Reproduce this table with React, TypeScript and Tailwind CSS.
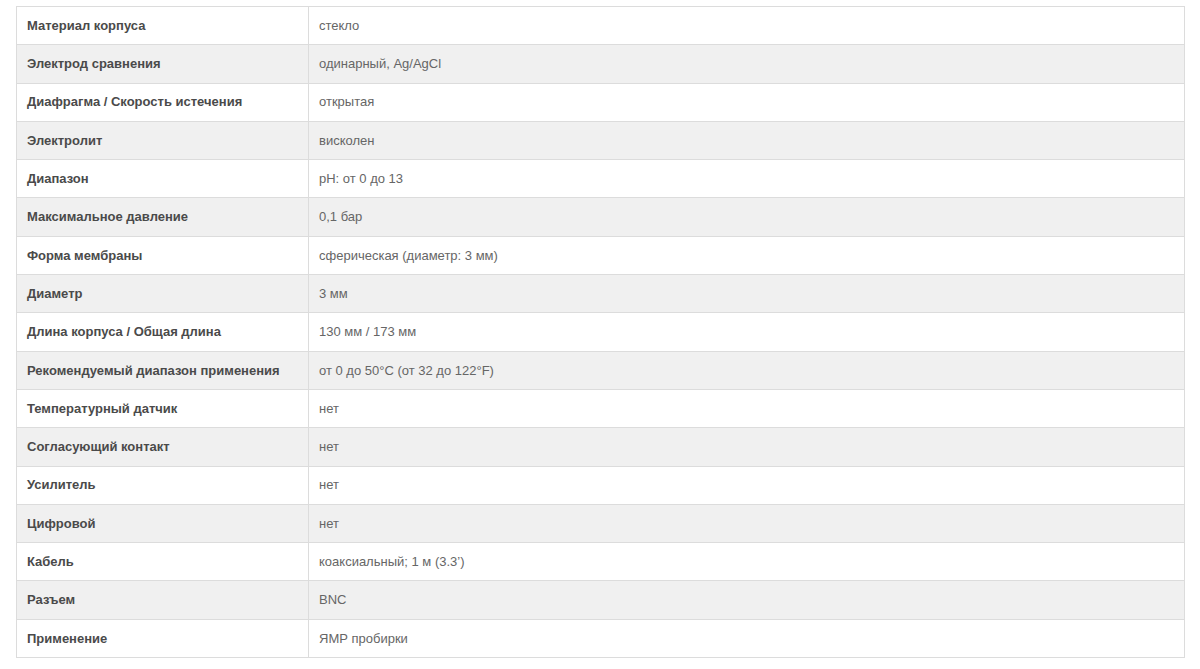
const rows: [string, string][] = [
  ["Материал корпуса", "стекло"],
  ["Электрод сравнения", "одинарный, Ag/AgCl"],
  ["Диафрагма / Скорость истечения", "открытая"],
  ["Электролит", "висколен"],
  ["Диапазон", "pH: от 0 до 13"],
  ["Максимальное давление", "0,1 бар"],
  ["Форма мембраны", "сферическая (диаметр: 3 мм)"],
  ["Диаметр", "3 мм"],
  ["Длина корпуса / Общая длина", "130 мм / 173 мм"],
  ["Рекомендуемый диапазон применения", "от 0 до 50°C (от 32 до 122°F)"],
  ["Температурный датчик", "нет"],
  ["Согласующий контакт", "нет"],
  ["Усилитель", "нет"],
  ["Цифровой", "нет"],
  ["Кабель", "коаксиальный; 1 м (3.3’)"],
  ["Разъем", "BNC"],
  ["Применение", "ЯМР пробирки"],
];

export default function App() {
  return (
    <div className="h-[669px] w-[1200px] bg-white pt-[6px] pl-[16px] font-['Liberation_Sans',Arial,sans-serif] text-[13px]">
      <table className="w-[1169px] border-collapse border border-[#d4d4d4]">
        <tbody>
          {rows.map(([k, v], i) => (
            <tr key={k} className={`h-[38.3px] ${i % 2 ? "bg-[#f0f0f0]" : "bg-white"}`}>
              <td className="w-[292px] border border-[#dcdcdc] px-[10px] align-middle font-bold text-[#4a4a4a]">
                {k}
              </td>
              <td className="border border-[#dcdcdc] px-[10px] align-middle text-[#666]">{v}</td>
            </tr>
          ))}
        </tbody>
      </table>
    </div>
  );
}
